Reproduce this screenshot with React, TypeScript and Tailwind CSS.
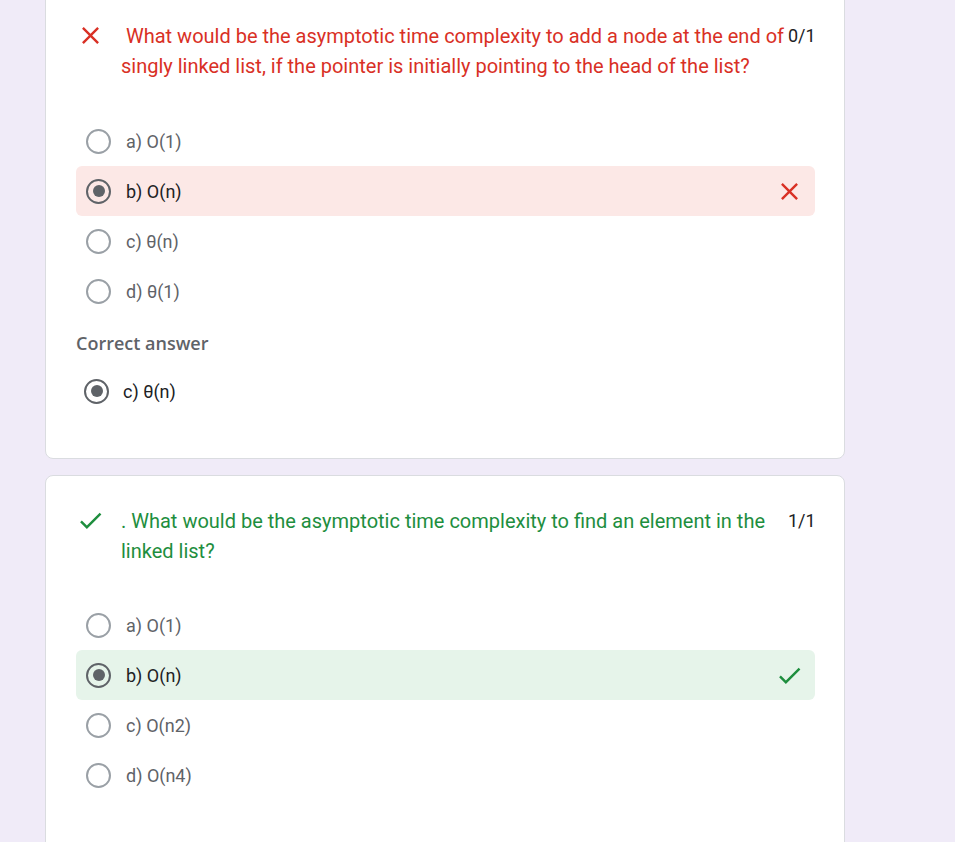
import React from 'react'

type Option = { label: string; selected?: boolean }

type Question = {
  text: string
  score: string
  correct: boolean
  options: Option[]
  correctAnswer?: string
}

const questions: Question[] = [
  {
    text: '\u00a0What would be the asymptotic time complexity to add a node at the end of singly linked list, if the pointer is initially pointing to the head of the list?',
    score: '0/1',
    correct: false,
    options: [
      { label: 'a) O(1)' },
      { label: 'b) O(n)', selected: true },
      { label: 'c) θ(n)' },
      { label: 'd) θ(1)' },
    ],
    correctAnswer: 'c) θ(n)',
  },
  {
    text: '. What would be the asymptotic time complexity to find an element in the linked list?',
    score: '1/1',
    correct: true,
    options: [
      { label: 'a) O(1)' },
      { label: 'b) O(n)', selected: true },
      { label: 'c) O(n2)' },
      { label: 'd) O(n4)' },
    ],
  },
]

function CloseIcon({ className }: { className?: string }) {
  return (
    <svg viewBox="0 0 24 24" className={className} fill="currentColor">
      <path d="M19 6.41L17.59 5 12 10.59 6.41 5 5 6.41 10.59 12 5 17.59 6.41 19 12 13.41 17.59 19 19 17.59 13.41 12z" />
    </svg>
  )
}

function CheckIcon({ className }: { className?: string }) {
  return (
    <svg viewBox="0 0 24 24" className={className} fill="currentColor">
      <path d="M9 16.17L4.83 12l-1.42 1.41L9 19 21 7l-1.41-1.41z" />
    </svg>
  )
}

function Radio({ checked }: { checked?: boolean }) {
  if (checked) {
    return (
      <span className="w-[25px] h-[25px] rounded-full border-2 border-[#5f6368] flex items-center justify-center shrink-0">
        <span className="w-[12px] h-[12px] rounded-full bg-[#5f6368]" />
      </span>
    )
  }
  return <span className="w-[25px] h-[25px] rounded-full border-2 border-[#9aa0a6] shrink-0" />
}

function QuestionCard({ q, first }: { q: Question; first?: boolean }) {
  const rowBg = q.correct ? 'bg-[#e6f4ea]' : 'bg-[#fce8e6]'
  const accent = q.correct ? 'text-[#1e8e3e]' : 'text-[#d93025]'

  return (
    <div
      className={`bg-white border border-[#dadce0] rounded-lg pt-[30px] pl-[30px] pr-[29px] ${
        first ? '-mt-[10px] pb-[42px]' : 'pb-[60px]'
      }`}
    >
      {/* Header */}
      <div className="flex items-start">
        <div className={`w-[29px] h-[29px] shrink-0 ${accent}`}>
          {q.correct ? <CheckIcon className="w-[29px] h-[29px]" /> : <CloseIcon className="w-[29px] h-[29px]" />}
        </div>
        <p className={`flex-1 ml-[16px] text-[20px] leading-[30px] ${accent}`}>{q.text}</p>
        <span className="w-[27px] text-[18px] leading-[30px] text-[#202124] shrink-0 whitespace-nowrap">{q.score}</span>
      </div>

      {/* Options */}
      <div className={first ? 'mt-[35px]' : 'mt-[34px]'}>
        {q.options.map(opt => (
          <div
            key={opt.label}
            className={`flex items-center h-[50px] pl-[10px] pr-[11px] rounded-md ${opt.selected ? rowBg : ''}`}
          >
            <Radio checked={opt.selected} />
            <span className={`ml-[15px] flex-1 text-[18px] ${opt.selected ? 'text-[#202124]' : 'text-[#5f6368]'}`}>
              {opt.label}
            </span>
            {opt.selected &&
              (q.correct ? (
                <CheckIcon className="w-[29px] h-[29px] text-[#1e8e3e]" />
              ) : (
                <CloseIcon className="w-[29px] h-[29px] text-[#d93025]" />
              ))}
          </div>
        ))}
      </div>

      {q.correctAnswer && (
        <>
          <p className="mt-[15px] text-[18px] leading-[24px] font-semibold text-[#5f6368] font-['Open_Sans',Roboto,sans-serif]">
            Correct answer
          </p>
          <div className="flex items-center h-[50px] mt-[11px] pl-[8px]">
            <Radio checked />
            <span className="ml-[14px] text-[18px] text-[#202124]">{q.correctAnswer}</span>
          </div>
        </>
      )}
    </div>
  )
}

export default function App() {
  return (
    <div className="bg-[#f0ebf8] font-['Roboto',Arial,sans-serif] overflow-hidden h-[842px]">
      <div className="ml-[45px] w-[800px] flex flex-col gap-[16px]">
        {questions.map((q, i) => (
          <QuestionCard key={i} q={q} first={i === 0} />
        ))}
      </div>
    </div>
  )
}
